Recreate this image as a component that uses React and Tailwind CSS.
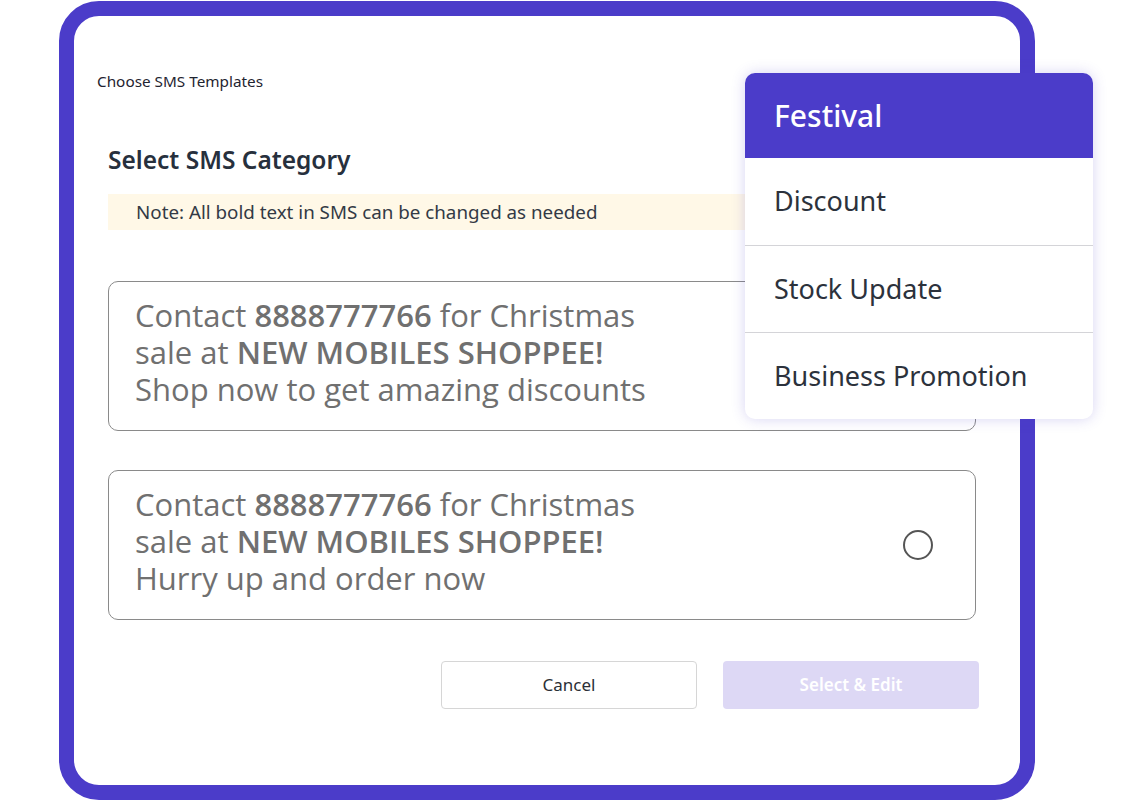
import React from "react";

const categories = ["Discount", "Stock Update", "Business Promotion"];

const templates = [
  { id: 1, last: "Shop now to get amazing discounts" },
  { id: 2, last: "Hurry up and order now" },
];

const TemplateCard = ({ last }) => {
  return (
    <div className="flex h-[150px] w-[868px] items-start justify-between rounded-[10px] border border-[#8a8a8a] pr-[42px] pl-[26px] pt-[15px]">
      <p
        className="text-[31px] leading-[37px] text-[#707070]"
        style={{ fontFamily: '"Open Sans", sans-serif' }}
      >
        Contact <span className="font-semibold">8888777766</span> for Christmas
        <br />
        sale at <span className="font-semibold">NEW MOBILES SHOPPEE!</span>
        <br />
        {last}
      </p>
      <span className="mt-[44px] size-[30px] rounded-full border-2 border-[#555]" />
    </div>
  );
};

const App = () => {
  return (
    <div
      className="relative h-[800px] w-[1133px] overflow-hidden bg-white"
      style={{ fontFamily: '"Noto Sans", sans-serif' }}
    >
      <div className="relative mt-px ml-[59px] h-[799px] w-[976px] rounded-[40px] border-[15px] border-[#4b3cc9] bg-white">
        <div className="flex flex-col pt-[55px]">
          <h2 className="pl-[23px] text-[15.3px] leading-5 text-[#1f2430]">
            Choose SMS Templates
          </h2>

          <div className="flex flex-col pl-[34px]">
            <h1 className="mt-[53px] text-[24.5px] leading-8 font-semibold text-[#27303d]">
              Select SMS Category
            </h1>
            <div className="mt-[18px] flex h-9 w-[868px] items-center bg-[#fff8e7] pl-[28px] text-[18.8px] text-[#333a45]">
              Note: All bold text in SMS can be changed as needed
            </div>

            <div className="mt-[51px] flex flex-col gap-[39px]">
              {templates.map((t) => (
                <TemplateCard key={t.id} last={t.last} />
              ))}
            </div>

            <div className="mt-[41px] flex gap-[26px] pl-[333px]">
              <button className="h-12 w-[256px] rounded border border-[#d6d6d6] bg-white text-[17px] text-[#2b2f36]">
                Cancel
              </button>
              <button className="h-12 w-[256px] rounded bg-[#ddd8f5] text-[17px] font-semibold text-white">
                Select &amp; Edit
              </button>
            </div>
          </div>
        </div>

        <div className="absolute top-[57px] left-[671px] w-[348px] overflow-hidden rounded-[10px] bg-white shadow-[0_0_14px_rgba(75,60,201,0.22)]">
          <div className="flex h-[85px] items-center bg-[#4b3cc9] pl-[29px] text-[30px] font-medium text-white">
            Festival
          </div>
          {categories.map((c, i) => (
            <div
              key={c}
              className={`flex h-[87px] items-center pl-[29px] text-[27px] text-[#2c323c] ${
                i > 0 ? "border-t border-[#d4d4d8]" : ""
              }`}
            >
              {c}
            </div>
          ))}
        </div>
      </div>
    </div>
  );
};

export default App;
